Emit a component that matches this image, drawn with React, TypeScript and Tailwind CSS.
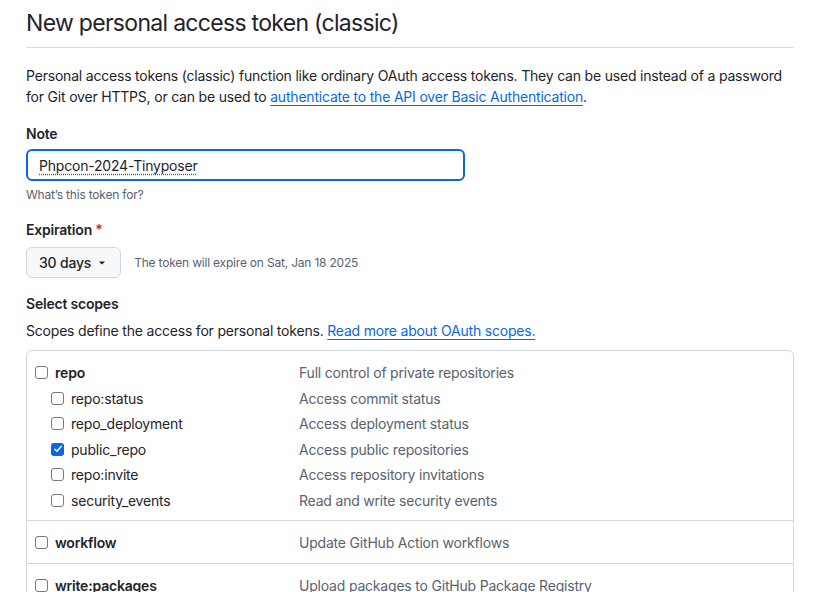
import React from 'react';

type Scope = { name: string; desc: string; checked?: boolean };

const groups: { main: Scope; subs?: Scope[] }[] = [
  {
    main: { name: 'repo', desc: 'Full control of private repositories' },
    subs: [
      { name: 'repo:status', desc: 'Access commit status' },
      { name: 'repo_deployment', desc: 'Access deployment status' },
      { name: 'public_repo', desc: 'Access public repositories', checked: true },
      { name: 'repo:invite', desc: 'Access repository invitations' },
      { name: 'security_events', desc: 'Read and write security events' },
    ],
  },
  { main: { name: 'workflow', desc: 'Update GitHub Action workflows' } },
  { main: { name: 'write:packages', desc: 'Upload packages to GitHub Package Registry' } },
];

const Checkbox: React.FC<{ checked?: boolean }> = ({ checked }) =>
  checked ? (
    <span className="w-[13px] h-[13px] rounded-[3px] bg-[#0b68e0] flex items-center justify-center shrink-0">
      <svg viewBox="0 0 12 12" className="w-[10px] h-[10px]">
        <path d="M2.2 6.3 L4.8 8.8 L9.8 2.9" fill="none" stroke="white" strokeWidth="1.8" strokeLinecap="round" strokeLinejoin="round" />
      </svg>
    </span>
  ) : (
    <span className="w-[13px] h-[13px] rounded-[3px] border border-[#7a7a7a] bg-white shrink-0" />
  );

const Row: React.FC<{ scope: Scope; sub?: boolean }> = ({ scope, sub }) => (
  <div className="flex items-center h-[25.5px]">
    <div className={`flex items-center gap-[7px] w-[272px] ${sub ? 'pl-[24px]' : 'pl-[8px]'}`}>
      <Checkbox checked={scope.checked} />
      <span className={sub ? 'text-[#1f2328]' : 'font-semibold text-[#1f2328]'}>{scope.name}</span>
    </div>
    <span className="text-[#59636e]">{scope.desc}</span>
  </div>
);

export default function App() {
  return (
    <div className="bg-white min-h-screen text-[#1f2328] text-[14px] tracking-[-0.2px]" style={{ fontFamily: 'Inter, "Liberation Sans", sans-serif' }}>
      <div className="pl-[26px] pr-[23px] pt-[8px]">
        <h1 className="text-[23px] leading-[30px] pb-[9px] border-b border-[#d8dee4] tracking-[-0.7px]">New personal access token (classic)</h1>

        <p className="mt-[17px] leading-[21px]">
          Personal access tokens (classic) function like ordinary OAuth access tokens. They can be used instead of a password for Git over HTTPS, or can be used to{' '}
          <a className="text-[#0969da] underline underline-offset-[3px]">authenticate to the API over Basic Authentication</a>.
        </p>

        <div className="mt-[17px] font-semibold leading-[20px]">Note</div>
        <div className="mt-[5px] w-[439px] h-[32px] rounded-[6px] border-2 border-[#0969da] flex items-center pl-[11px]">
          <span className="underline decoration-dotted decoration-[#d1242f] underline-offset-[3px]">Phpcon-2024-Tinyposer</span>
        </div>
        <div className="mt-[5px] text-[12px] text-[#59636e] leading-[18px]">What’s this token for?</div>

        <div className="mt-[16px] font-semibold leading-[20px]">
          Expiration <span className="text-[#d1242f]">*</span>
        </div>
        <div className="mt-[7px] flex items-center gap-[13px]">
          <button className="h-[31px] px-[12px] rounded-[6px] border border-[#d1d9e0] bg-[#f6f8fa] flex items-center gap-[5px] font-medium">
            30 days
            <svg viewBox="0 0 16 16" className="w-[12px] h-[12px]">
              <path d="M4 6 L8 10 L12 6 Z" fill="#1f2328" />
            </svg>
          </button>
          <span className="text-[12px] text-[#59636e]">The token will expire on Sat, Jan 18 2025</span>
        </div>

        <div className="mt-[16px] font-semibold leading-[20px]">Select scopes</div>
        <p className="mt-[6px] leading-[21px]">
          Scopes define the access for personal tokens.{' '}
          <a className="text-[#0969da] underline underline-offset-[3px]">Read more about OAuth scopes.</a>
        </p>

        <div className="mt-[9px] border border-[#d1d9e0] rounded-[6px]">
          {groups.map((g, i) => (
            <div key={g.main.name} className={`pt-[9px] pb-[7px] ${i > 0 ? 'border-t border-[#d1d9e0]' : ''}`}>
              <Row scope={g.main} />
              {g.subs?.map((s) => <Row key={s.name} scope={s} sub />)}
            </div>
          ))}
        </div>
      </div>
    </div>
  );
}
